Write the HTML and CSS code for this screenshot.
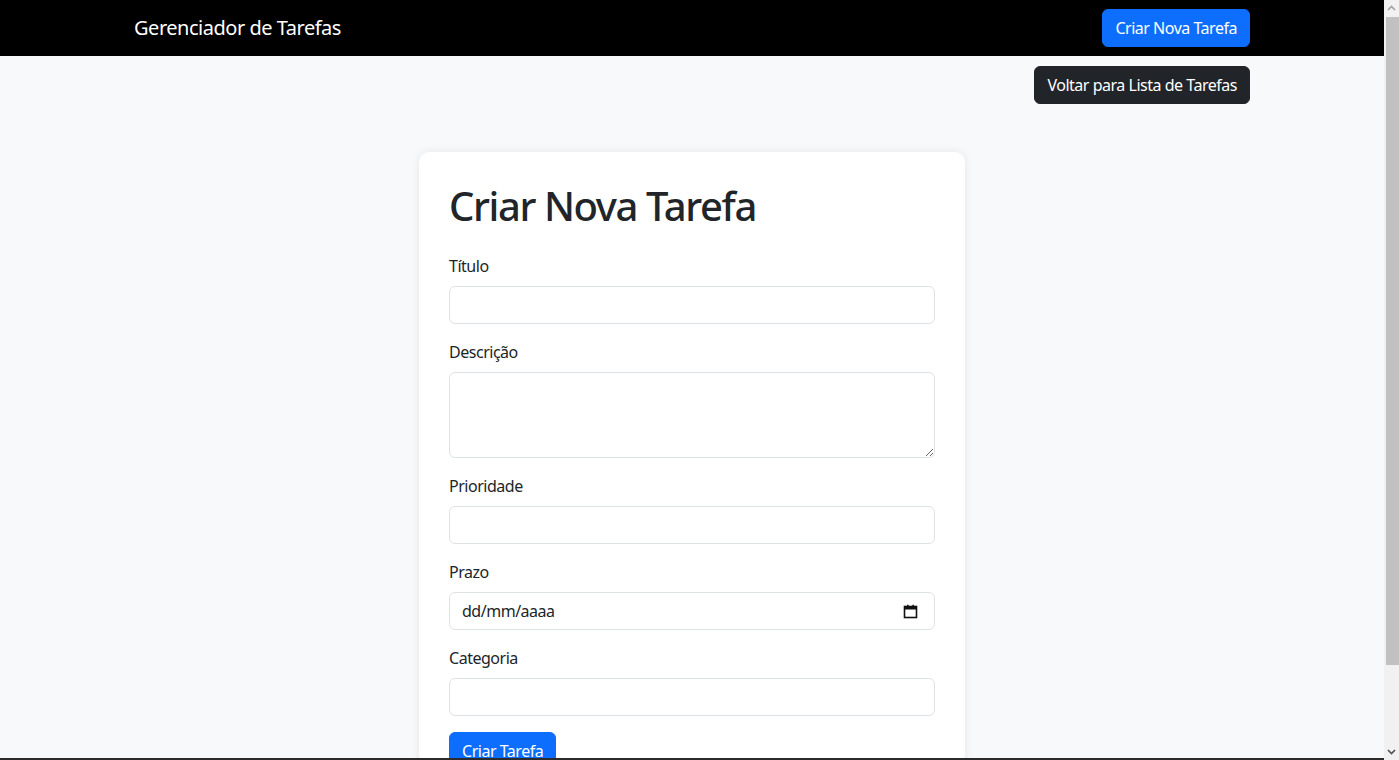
FILE: index.html
```html
<!DOCTYPE html>
<html lang="pt-BR">
<head>
<meta charset="utf-8">
<title>Criar Nova Tarefa</title>
<link rel="stylesheet" href="styles.css">
</head>
<body>
<nav class="navbar">
  <div class="container nav-inner">
    <a class="brand" href="#">Gerenciador de Tarefas</a>
    <a class="btn btn-primary" href="#">Criar Nova Tarefa</a>
  </div>
</nav>
<main class="container">
  <div class="back-row">
    <a class="btn btn-dark" href="#">Voltar para Lista de Tarefas</a>
  </div>
  <div class="row">
    <div class="card">
      <h1 class="title">Criar Nova Tarefa</h1>
      <form class="form">
        <div class="field">
          <label class="label" for="titulo">Título</label>
          <input class="control" id="titulo" type="text">
        </div>
        <div class="field">
          <label class="label" for="descricao">Descrição</label>
          <textarea class="control textarea" id="descricao" rows="3"></textarea>
        </div>
        <div class="field">
          <label class="label" for="prioridade">Prioridade</label>
          <input class="control" id="prioridade" type="text">
        </div>
        <div class="field">
          <label class="label" for="prazo">Prazo</label>
          <div class="control date-control">
            <span class="date-placeholder">dd/mm/aaaa</span>
            <svg class="cal-icon" width="15" height="15" viewBox="0 0 15 15" aria-hidden="true">
              <rect x="1.5" y="2.5" width="12" height="11" fill="none" stroke="#111" stroke-width="1.6"/>
              <rect x="1.5" y="2.5" width="12" height="3" fill="#111"/>
              <rect x="4" y="0.8" width="1.6" height="2.5" fill="#111"/>
              <rect x="9.4" y="0.8" width="1.6" height="2.5" fill="#111"/>
            </svg>
          </div>
        </div>
        <div class="field">
          <label class="label" for="categoria">Categoria</label>
          <input class="control" id="categoria" type="text">
        </div>
        <button class="btn btn-primary submit" type="button">Criar Tarefa</button>
      </form>
    </div>
  </div>
</main>
<div class="scrollbar" aria-hidden="true">
  <div class="sb-arrow">
    <svg width="15" height="17" viewBox="0 0 15 17"><path d="M4 10 L7.5 6.5 L11 10" fill="none" stroke="#a3a3a3" stroke-width="1.6"/></svg>
  </div>
  <div class="sb-track">
    <div class="sb-thumb"></div>
  </div>
  <div class="sb-arrow">
    <svg width="15" height="17" viewBox="0 0 15 17"><path d="M4 7 L7.5 10.5 L11 7" fill="none" stroke="#505050" stroke-width="1.6"/></svg>
  </div>
</div>
<div class="bottom-edge" aria-hidden="true"></div>
</body>
</html>
```

FILE: styles.css
```css
* {
  box-sizing: border-box;
}
body {
  margin: 0 15px 0 0;
  background: #f8f9fa;
  color: #212529;
  font-family: "Noto Sans", "Open Sans", sans-serif;
  font-size: 16px;
  line-height: 1.5;
  letter-spacing: -0.03em;
}
.container {
  width: 1140px;
  margin: 0 auto;
  padding: 0 12px;
}
.navbar {
  background: #000;
  padding: 8px 0;
}
.nav-inner {
  display: flex;
  align-items: center;
  justify-content: space-between;
}
.brand {
  color: #fff;
  text-decoration: none;
  font-size: 20px;
  line-height: 30px;
  padding: 5px 0;
}
.btn {
  display: inline-block;
  font-family: inherit;
  font-size: 16px;
  line-height: 24px;
  letter-spacing: inherit;
  padding: 6px 12px;
  border: 1px solid transparent;
  border-radius: 6px;
  text-decoration: none;
  cursor: pointer;
}
.btn-primary {
  background: #0d6efd;
  border-color: #0d6efd;
  color: #fff;
}
.btn-dark {
  background: #212529;
  border-color: #212529;
  color: #fff;
}
.back-row {
  display: flex;
  justify-content: flex-end;
  margin-top: 10px;
}
.row {
  display: flex;
  justify-content: center;
  margin-top: 48px;
  padding-bottom: 60px;
}
.card {
  width: 546px;
  background: #fff;
  border-radius: 10px;
  box-shadow: 0 0 10px rgba(0, 0, 0, 0.08);
  padding: 30px;
}
.title {
  margin: 0 0 24px;
  font-size: 40px;
  font-weight: 500;
  line-height: 48px;
  letter-spacing: -0.035em;
}
.field {
  margin-bottom: 16px;
}
.label {
  display: block;
  margin-bottom: 8px;
}
.control {
  display: block;
  width: 100%;
  height: 38px;
  padding: 6px 12px;
  font-family: inherit;
  font-size: 16px;
  line-height: 24px;
  color: #212529;
  background: #fff;
  border: 1px solid #dee2e6;
  border-radius: 6px;
}
.textarea {
  height: 86px;
  resize: vertical;
}
.date-control {
  display: flex;
  align-items: center;
  justify-content: space-between;
}
.cal-icon {
  display: block;
  margin-right: 4px;
}
.submit {
  margin: 0;
}
.scrollbar {
  position: fixed;
  top: 0;
  right: 0;
  bottom: 0;
  width: 15px;
  background: #f1f1f1;
  display: flex;
  flex-direction: column;
}
.sb-arrow {
  height: 17px;
  flex: none;
}
.sb-arrow svg {
  display: block;
}
.sb-track {
  flex: 1;
}
.sb-thumb {
  height: 648px;
  margin: 0 0 0 2px;
  background: #c1c1c1;
}
.bottom-edge {
  position: fixed;
  left: 0;
  right: 15px;
  bottom: 0;
  height: 2px;
  background: #2b2b2b;
}
```
